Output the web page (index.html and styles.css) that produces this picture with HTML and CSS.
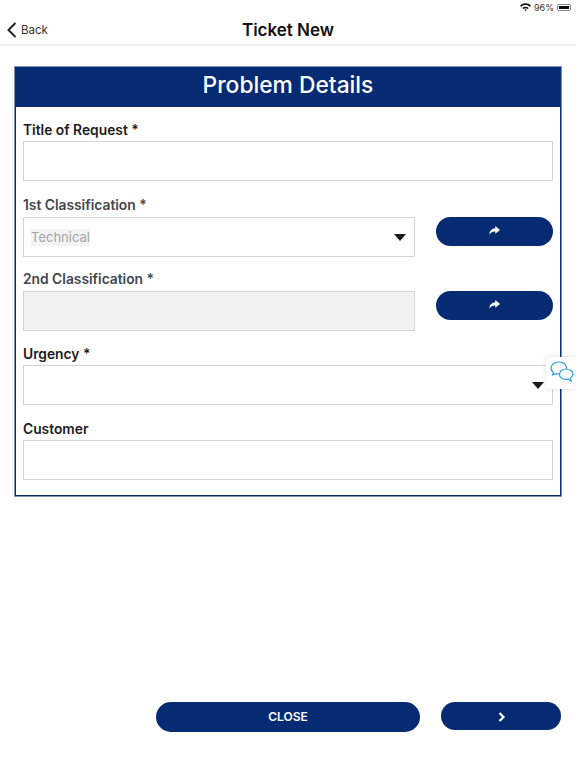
FILE: index.html
```html
<!DOCTYPE html>
<html lang="en">
<head>
    <meta charset="UTF-8">
    <meta name="viewport" content="width=device-width, initial-scale=1.0">
    <title>Ticket New</title>
    <link rel="stylesheet" href="styles.css">
</head>
<body>
    <div class="page">
        <div class="status-bar">
            <svg class="wifi" width="11" height="8" viewBox="0 0 11 8"><path d="M0 2.6C3-.6 8-.6 11 2.6L9.8 3.900C7.400 1.500 3.600 1.500 1.200 3.900z M2.200 4.900C4 3.200 7 3.200 8.800 4.900L7.700 6C6.400 4.900 4.600 4.900 3.300 6z M4.100 6.800C5 6 6 6 6.900 6.800L5.500 8z" fill="#111"/></svg>
            <span class="battery-text">96%</span>
            <span class="battery"><span class="battery-level"></span></span>
        </div>
        <header class="nav">
            <div class="back">
                <svg width="10" height="16" viewBox="0 0 10 16"><path d="M8.500 1L1.500 8l7 7" fill="none" stroke="#222" stroke-width="2"/></svg>
                <span>Back</span>
            </div>
            <h1>Ticket New</h1>
        </header>

        <section class="panel">
            <h2 class="panel-title">Problem Details</h2>
            <div class="panel-body">
                <div class="field">
                    <label>Title of Request *</label>
                    <div class="input"></div>
                </div>
                <div class="field">
                    <label class="muted">1st Classification *</label>
                    <div class="row">
                        <div class="input select"><span class="value">Technical</span><i class="arrow"></i></div>
                        <button class="pill" type="button">
                            <svg width="11" height="9" viewBox="0 0 11 9"><path d="M6.300 0L11 3.900 6.300 7.800V5.400C3.800 5.300 1.800 6.200.4 8.600.5 5 2.600 2.600 6.300 2.300z" fill="#fff"/></svg>
                        </button>
                    </div>
                </div>
                <div class="field">
                    <label class="muted">2nd Classification *</label>
                    <div class="row">
                        <div class="input disabled"></div>
                        <button class="pill" type="button">
                            <svg width="11" height="9" viewBox="0 0 11 9"><path d="M6.300 0L11 3.900 6.300 7.800V5.400C3.800 5.300 1.800 6.200.4 8.600.5 5 2.600 2.600 6.300 2.300z" fill="#fff"/></svg>
                        </button>
                    </div>
                </div>
                <div class="field">
                    <label>Urgency *</label>
                    <div class="input select"><i class="arrow"></i></div>
                </div>
                <div class="field">
                    <label>Customer</label>
                    <div class="input"></div>
                </div>
            </div>
        </section>

        <div class="chat">
            <svg width="24" height="23" viewBox="0 0 24 23" fill="#fff" stroke="#2f9bd8" stroke-width="1.200">
                <path d="M9 1C4.500 1 1 3.600 1 7c0 1.800 1 3.300 2.400 4.400L2.600 14l3.200-1.400c1 .3 2 .4 3.200.4 4.500 0 7.500-2.600 7.500-6S13.500 1 9 1z"/>
                <path d="M16 8c-3.700 0-6.500 2.300-6.500 5.200s2.800 5.200 6.500 5.200c.7 0 1.300-.1 1.900-.2l3.400 1.800-.7-3.200c1.500-1 2.400-2.200 2.400-3.600C23 10.300 19.700 8 16 8z"/>
            </svg>
        </div>

        <div class="actions">
            <button class="btn btn-close" type="button">CLOSE</button>
            <button class="btn btn-next" type="button">
                <svg width="8" height="10" viewBox="0 0 8 10"><path d="M1.500 1l4 4-4 4" fill="none" stroke="#fff" stroke-width="2.200"/></svg>
            </button>
        </div>
    </div>
</body>
</html>
```

FILE: styles.css
```css
* {
    box-sizing: border-box;
}
body {
    margin: 0;
    background: #fff;
    font-family: Inter, "Liberation Sans", sans-serif;
    color: #1c1c1e;
}
.page {
    position: relative;
    height: 768px;
    display: flex;
    flex-direction: column;
    overflow: hidden;
}
.status-bar {
    height: 14px;
    padding: 0 5px 0 0;
    display: flex;
    justify-content: flex-end;
    align-items: center;
    gap: 3px;
}
.battery-text {
    font-size: 9px;
    color: #333;
}
.battery {
    width: 14px;
    height: 7px;
    padding: 1px;
    border: 1px solid #888;
    border-radius: 2px;
    display: flex;
}
.battery-level {
    flex: 1;
    background: #111;
}
.nav {
    position: relative;
    height: 32px;
    padding-top: 2px;
    border-bottom: 2px solid #eee;
    display: flex;
    align-items: center;
    justify-content: center;
}
.nav h1 {
    margin: 0;
    font-size: 17px;
    font-weight: 600;
    color: #111;
}
.back {
    position: absolute;
    left: 7px;
    top: 8px;
    display: flex;
    align-items: center;
    gap: 4px;
    font-size: 11.500px;
    color: #333;
}
.panel {
    margin: 21px 15px 0;
    height: 429px;
    border: 1px solid #062b73;
    border-top: 0;
    box-shadow: 0 0 0 1px rgba(6, 43, 115, 0.5);
}
.panel-title {
    margin: 0;
    height: 40px;
    line-height: 36px;
    background: #062b73;
    color: #fff;
    text-align: center;
    font-size: 22.800px;
    font-weight: 500;
}
.panel-body {
    padding: 12px 7px 0;
}
.field {
    margin-bottom: 12.500px;
}
.field:nth-child(1) {
    margin-bottom: 13.500px;
}
.field:nth-child(2) {
    margin-bottom: 12px;
}
.field label {
    display: block;
    height: 22px;
    line-height: 22px;
    font-size: 13.800px;
    font-weight: 600;
}
.field label.muted {
    line-height: 20px;
    color: #43464f;
}
.row {
    display: flex;
    gap: 21px;
}
.input {
    position: relative;
    flex: 1;
    height: 40px;
    border: 1px solid #d4d4d4;
    background: #fff;
}
.disabled {
    background: #f2f2f2;
}
.value {
    display: inline-block;
    margin: 11.500px 0 0 7px;
    font-size: 13px;
    line-height: 17px;
    color: #a6a6a6;
    background: #f3f3f3;
}
.arrow {
    position: absolute;
    right: 8px;
    top: 16px;
    border-left: 6.500px solid transparent;
    border-right: 6.500px solid transparent;
    border-top: 7px solid #1a1a1a;
}
.pill {
    width: 117px;
    height: 29px;
    padding: 0;
    border: none;
    border-radius: 15px;
    background: #062b73;
    display: flex;
    align-items: center;
    justify-content: center;
    padding-bottom: 2px;
}
.chat {
    position: absolute;
    right: 0;
    top: 357px;
    width: 30px;
    height: 32px;
    padding: 4px 0 0 4px;
    background: #fff;
    border-radius: 4px 0 0 4px;
    box-shadow: 0 0 5px rgba(0, 0, 0, 0.12);
}
.actions {
    position: absolute;
    right: 15px;
    top: 702px;
    display: flex;
    gap: 21px;
    align-items: flex-start;
}
.btn {
    padding: 0;
    border: none;
    background: #062b73;
    color: #fff;
    font-family: inherit;
    font-size: 12px;
    font-weight: 600;
    display: flex;
    align-items: center;
    justify-content: center;
}
.btn-close {
    width: 264px;
    height: 30px;
    padding-bottom: 1px;
    border-radius: 15px;
}
.btn-next {
    width: 120px;
    height: 28px;
    padding: 1px 0 0 2px;
    border-radius: 14px;
}
```
